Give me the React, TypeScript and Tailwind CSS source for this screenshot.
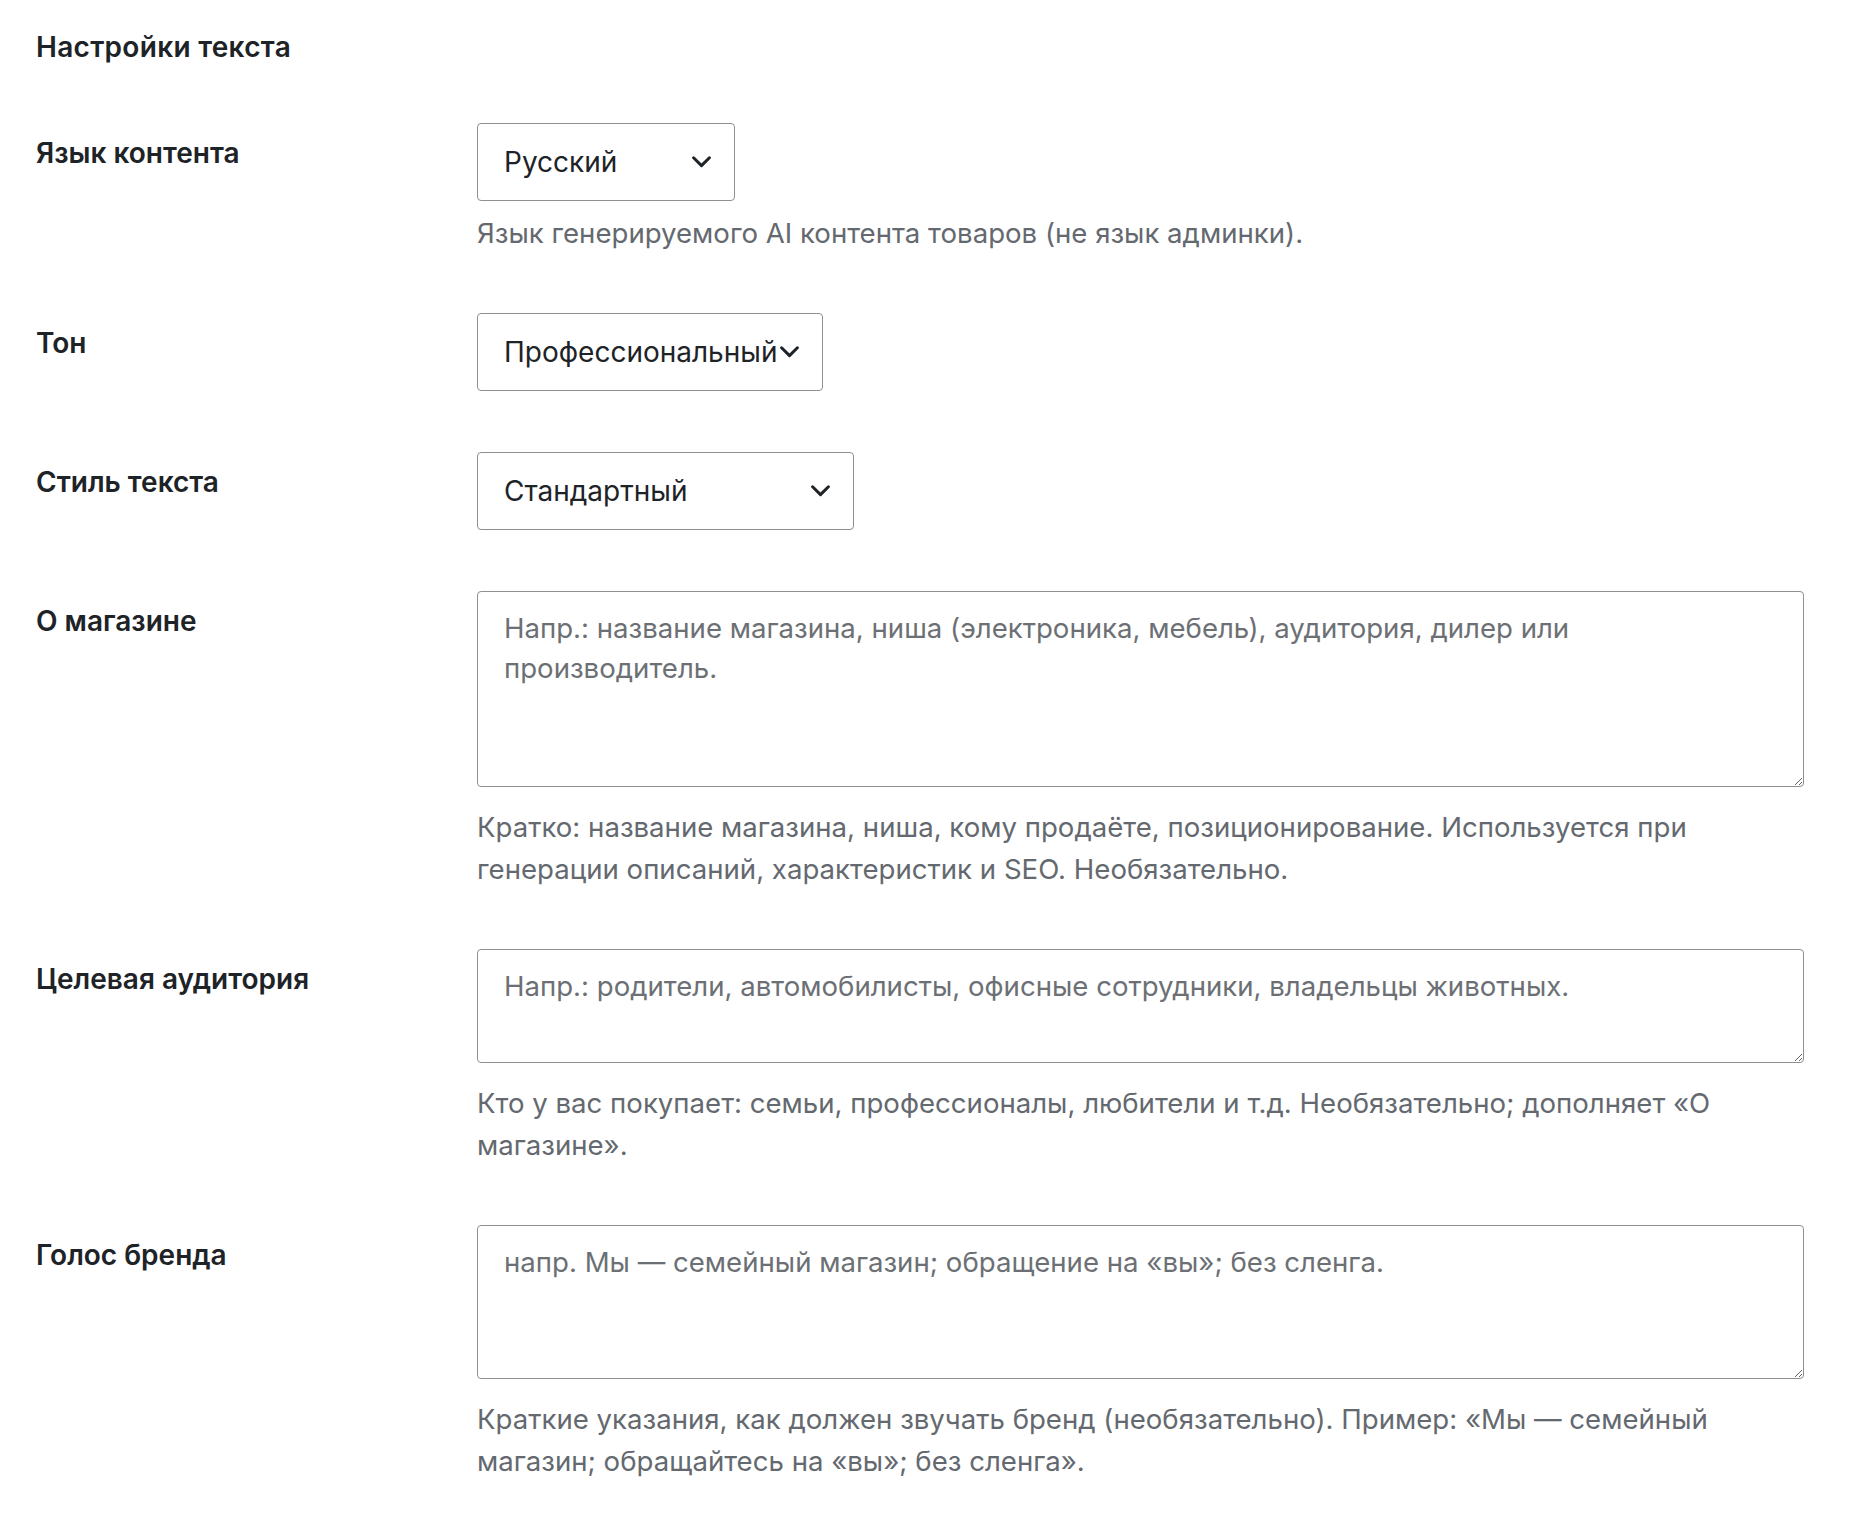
type Row = {
  label: string;
  kind: "select" | "textarea";
  value?: string;
  width?: string;
  height?: string;
  placeholder?: string;
  help: string;
};

const ROWS: Row[] = [
  {
    label: "Язык контента",
    kind: "select",
    value: "Русский",
    width: "w-[258px]",
    help: "Язык генерируемого AI контента товаров (не язык админки).",
  },
  { label: "Тон", kind: "select", value: "Профессиональный", width: "w-[346px]", help: "" },
  { label: "Стиль текста", kind: "select", value: "Стандартный", width: "w-[377px]", help: "" },
  {
    label: "О магазине",
    kind: "textarea",
    height: "h-[196px]",
    placeholder:
      "Напр.: название магазина, ниша (электроника, мебель), аудитория, дилер или производитель.",
    help: "Кратко: название магазина, ниша, кому продаёте, позиционирование. Используется при генерации описаний, характеристик и SEO. Необязательно.",
  },
  {
    label: "Целевая аудитория",
    kind: "textarea",
    height: "h-[114px]",
    placeholder: "Напр.: родители, автомобилисты, офисные сотрудники, владельцы животных.",
    help: "Кто у вас покупает: семьи, профессионалы, любители и т.д. Необязательно; дополняет «О магазине».",
  },
  {
    label: "Голос бренда",
    kind: "textarea",
    height: "h-[154px]",
    placeholder: "напр. Мы — семейный магазин; обращение на «вы»; без сленга.",
    help: "Краткие указания, как должен звучать бренд (необязательно). Пример: «Мы — семейный магазин; обращайтесь на «вы»; без сленга».",
  },
];

function SelectBox({ value, width }: { value: string; width: string }) {
  return (
    <div
      className={`flex h-[78px] ${width} items-center justify-between rounded-[4px] border border-[#8c8f94] bg-white pl-[26px] pr-[23px] text-[28px] text-[#1d2327]`}
    >
      <span className="whitespace-nowrap">{value}</span>
      <svg width="19" height="12" viewBox="0 0 19 12" fill="none" className="shrink-0">
        <path d="M1.6 1.8 L9.5 9.6 L17.4 1.8" stroke="#1d2327" strokeWidth="3" strokeLinecap="round" strokeLinejoin="round" />
      </svg>
    </div>
  );
}

export default function App() {
  return (
    <div className="min-h-[1514px] w-[1876px] bg-white pl-[36px] pt-[28px] font-['Inter','Noto_Sans',sans-serif] text-[#1d2327]">
      <h2 className="text-[28px] font-semibold leading-[38px] tracking-[0.3px]">Настройки текста</h2>
      <div className="mt-[26px] flex flex-col">
        {ROWS.map((row) => (
          <div key={row.label} className="flex pb-[30px] pt-[31px]">
            <div className="w-[441px] shrink-0 pt-[14px] text-[28px] font-semibold leading-[32px]">
              {row.label}
            </div>
            <div className="flex w-[1327px] flex-col">
              {row.kind === "select" ? (
                <SelectBox value={row.value!} width={row.width!} />
              ) : (
                <textarea
                  readOnly
                  placeholder={row.placeholder}
                  className={`block w-full ${row.height} resize-y rounded-[4px] border border-[#8c8f94] bg-white px-[26px] pt-[16px] text-[27.6px] leading-[40px] text-[#1d2327] outline-none placeholder:text-[#6c7075]`}
                />
              )}
              {row.help && (
                <p
                  className={`${row.kind === "select" ? "mt-[11px]" : "mt-[19px]"} mb-[-2px] text-[27.6px] leading-[42px] text-[#646970]`}
                >
                  {row.help}
                </p>
              )}
            </div>
          </div>
        ))}
      </div>
    </div>
  );
}
